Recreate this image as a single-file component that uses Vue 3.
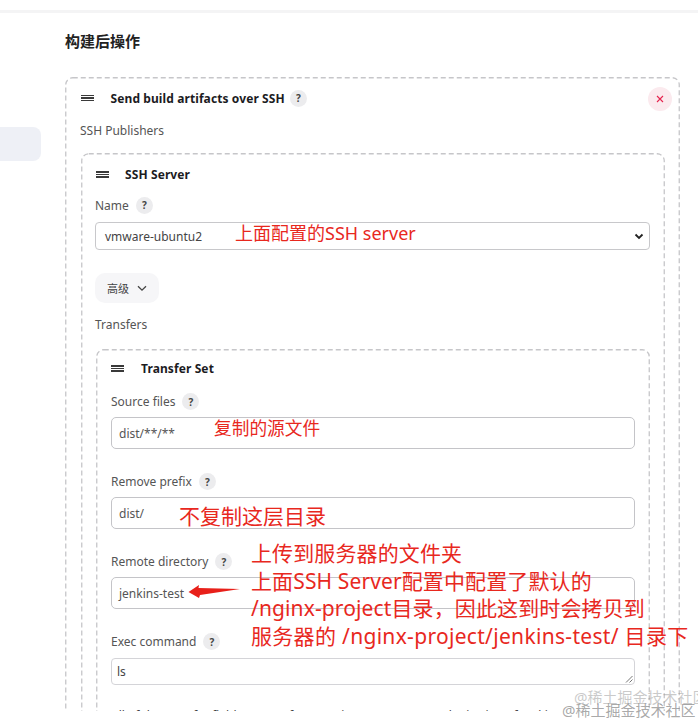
<template>
  <div class="page">
    <div class="top-line"></div>
    <div class="layout">
      <aside class="side">
        <div class="side-item"></div>
      </aside>
      <main class="main">
        <h2 class="section-title">构建后操作</h2>

        <div class="box outer">
          <svg class="dash"><rect x="0.75" y="0.75" rx="7" /></svg>
          <div class="box-head">
            <span class="grip"><i></i><i></i><i></i></span>
            <b>Send build artifacts over SSH</b>
            <span class="help">?</span>
            <span class="close">
              <svg width="8" height="8" viewBox="0 0 8 8"><path d="M1 1l6 6M7 1L1 7" stroke="#e6244f" stroke-width="1.1" fill="none" /></svg>
            </span>
          </div>
          <div class="label plain publishers">SSH Publishers</div>

          <div class="box server">
            <svg class="dash"><rect x="0.75" y="0.75" rx="7" /></svg>
            <div class="box-head small">
              <span class="grip"><i></i><i></i><i></i></span>
              <b>SSH Server</b>
            </div>
            <div class="label name">Name <span class="help">?</span></div>
            <div class="select">
              <span>vmware-ubuntu2</span>
              <svg width="10" height="7" viewBox="0 0 10 7"><path d="M1.5 1.5L5 5l3.5-3.5" stroke="#222" stroke-width="1.8" fill="none" /></svg>
            </div>
            <div class="adv">
              高级
              <svg width="10" height="7" viewBox="0 0 10 7"><path d="M1 1.2L5 5.2l4-4" stroke="#444" stroke-width="1.3" fill="none" /></svg>
            </div>
            <div class="label plain">Transfers</div>

            <div class="box transfer">
              <svg class="dash"><rect x="0.75" y="0.75" rx="7" /></svg>
              <div class="box-head small">
                <span class="grip"><i></i><i></i><i></i></span>
                <b>Transfer Set</b>
              </div>
              <div v-for="f in fields" :key="f.label" class="field">
                <div class="label">{{ f.label }} <span class="help">?</span></div>
                <div class="input">{{ f.value }}</div>
              </div>
              <div class="label exec">Exec command <span class="help">?</span></div>
              <div class="textarea">
                ls
                <svg class="resize" width="8" height="8" viewBox="0 0 8 8"><path d="M7.5 1L1 7.5M7.5 4.5L4.5 7.5" stroke="#666" stroke-width="0.9" fill="none" /></svg>
              </div>
              <div class="note">All of the transfer fields (except for Exec timeout) support substitution of Jenkins</div>
            </div>
          </div>
        </div>
      </main>
    </div>

    <div class="mark note-server">上面配置的SSH server</div>
    <div class="mark note-source">复制的源文件</div>
    <div class="mark note-prefix">不复制这层目录</div>
    <div class="mark note-remote">
      <div>上传到服务器的文件夹</div>
      <div>上面SSH Server配置中配置了默认的</div>
      <div>/nginx-project目录，因此这到时会拷贝到</div>
      <div>服务器的 /nginx-project/jenkins-test/ 目录下</div>
    </div>
    <svg class="arrow" width="54" height="14" viewBox="0 0 54 14">
      <path d="M0.5 7L11 0 10.5 3 52 4 12 10 11 13z" fill="#e8201a" />
    </svg>
    <div class="wm wm-back">@稀土掘金技术社区</div>
    <div class="wm wm-front">@稀土掘金技术社区</div>
  </div>
</template>

<script setup>
const fields = [
  { label: 'Source files', value: 'dist/**/**' },
  { label: 'Remove prefix', value: 'dist/' },
  { label: 'Remote directory', value: 'jenkins-test' },
]
</script>

<style>
html,
body {
  margin: 0;
  background: #fff;
}
</style>

<style scoped>
.page {
  position: relative;
  width: 698px;
  height: 723px;
  overflow: hidden;
  background: #fff;
  font-family: "Noto Sans", "Noto Sans CJK SC", sans-serif;
  font-size: 12px;
  color: #444;
}

.top-line {
  height: 3px;
  margin-top: 10px;
  background: #f4f4f5;
}

.layout {
  display: flex;
  height: 698px;
  overflow: hidden;
}

.side {
  width: 65px;
  flex: none;
}

.side-item {
  width: 41px;
  height: 34px;
  margin-top: 114px;
  background: #eef0f6;
  border-radius: 0 8px 8px 0;
}

.main {
  flex: 1;
  min-width: 0;
  padding-right: 18px;
}

.section-title {
  margin: 17px 0 25px;
  font-size: 15px;
  line-height: 22px;
  font-weight: 700;
  color: #222;
}

.box {
  position: relative;
}

.dash {
  position: absolute;
  left: 0;
  top: 0;
  width: 100%;
  height: 100%;
  pointer-events: none;
}

.dash rect {
  width: calc(100% - 1.5px);
  height: calc(100% - 1.5px);
  fill: none;
  stroke: #c6c6c9;
  stroke-width: 1.3;
  stroke-dasharray: 5 3;
}

.outer {
  padding: 1.5px 15.5px 20px;
}

.server {
  padding: 1.5px 14.5px 20px;
  margin-top: 13px;
}

.server > .box-head .grip {
  margin-left: 1px;
  margin-right: 16px;
}

.transfer {
  padding: 1.5px 15px 20px;
  margin-top: 15px;
  margin-left: 1px;
}

.box-head {
  position: relative;
  display: flex;
  align-items: center;
  height: 39px;
  font-size: 12px;
  color: #1c1c1f;
}

.box-head.small {
  height: 41px;
}

.transfer > .box-head.small {
  height: 37px;
  margin-bottom: 5.5px;
}

.box-head b {
  font-weight: 700;
  letter-spacing: 0.1px;
}

.grip {
  display: flex;
  flex-direction: column;
  gap: 1.4px;
  width: 13px;
  margin-right: 17px;
}

.grip i {
  display: block;
  height: 1.2px;
  background: #3a3a3a;
}

.help {
  display: flex;
  align-items: center;
  justify-content: center;
  flex: none;
  width: 17px;
  height: 17px;
  margin-left: 7px;
  border-radius: 50%;
  background: #ececee;
  color: #444;
  font-size: 10px;
  font-weight: 700;
}

.box-head .help {
  margin-left: 5px;
}

.close {
  position: absolute;
  right: -7px;
  top: 8px;
  display: flex;
  align-items: center;
  justify-content: center;
  width: 24px;
  height: 24px;
  border-radius: 50%;
  background: #fbeaee;
}

.label {
  display: flex;
  align-items: center;
  height: 18px;
  color: #555;
  margin-bottom: 6px;
}

.label.plain {
  margin-bottom: 0;
  margin-top: 4px;
}

.publishers {
  margin-left: -0.5px;
}

.label.name {
  margin-top: 1px;
}

.label.exec {
  margin-bottom: 7px;
}

.select {
  display: flex;
  align-items: center;
  justify-content: space-between;
  box-sizing: border-box;
  height: 28px;
  margin-top: 8px;
  padding: 0 5px 0 9px;
  border: 1px solid #c8c8cb;
  border-radius: 4px;
  color: #444;
}

.adv {
  display: flex;
  align-items: center;
  gap: 8px;
  width: fit-content;
  height: 30px;
  margin: 23px 0 12.5px;
  padding: 0 12px;
  border-radius: 10px;
  background: #f6f6f8;
  font-size: 11px;
  color: #444;
}

.field {
  margin-bottom: 24px;
}

.input {
  box-sizing: border-box;
  height: 32px;
  line-height: 31px;
  padding: 0 7px;
  border: 1.5px solid #c4c4c8;
  border-radius: 5px;
  color: #555;
}

.textarea {
  position: relative;
  box-sizing: border-box;
  height: 27px;
  line-height: 25px;
  padding: 0 5px;
  border: 1px solid #d4d4d8;
  border-radius: 4px;
  color: #444;
}

.resize {
  position: absolute;
  right: 1px;
  bottom: 1px;
}

.note {
  margin-top: 22px;
  line-height: 18px;
  white-space: nowrap;
  overflow: hidden;
  color: #444;
}

.mark {
  position: absolute;
  color: #e8281e;
  white-space: nowrap;
}

.note-server {
  left: 235px;
  top: 221px;
  font-size: 18px;
  line-height: 25px;
}

.note-source {
  left: 214px;
  top: 416px;
  font-size: 17.7px;
  line-height: 25px;
}

.note-prefix {
  left: 179px;
  top: 502px;
  font-size: 21px;
  line-height: 28px;
}

.note-remote {
  left: 251px;
  top: 540px;
  font-size: 21px;
  line-height: 27.6px;
  letter-spacing: 0.12px;
}

.note-remote div:last-child {
  letter-spacing: 0.31px;
}

.arrow {
  position: absolute;
  left: 188px;
  top: 585px;
}

.wm {
  position: absolute;
  font-size: 15px;
  line-height: 20px;
  white-space: nowrap;
}

.wm-back {
  left: 574px;
  top: 687px;
  color: rgba(150, 150, 150, 0.5);
}

.wm-front {
  left: 562px;
  top: 700px;
  color: rgba(120, 120, 120, 0.65);
}
</style>
